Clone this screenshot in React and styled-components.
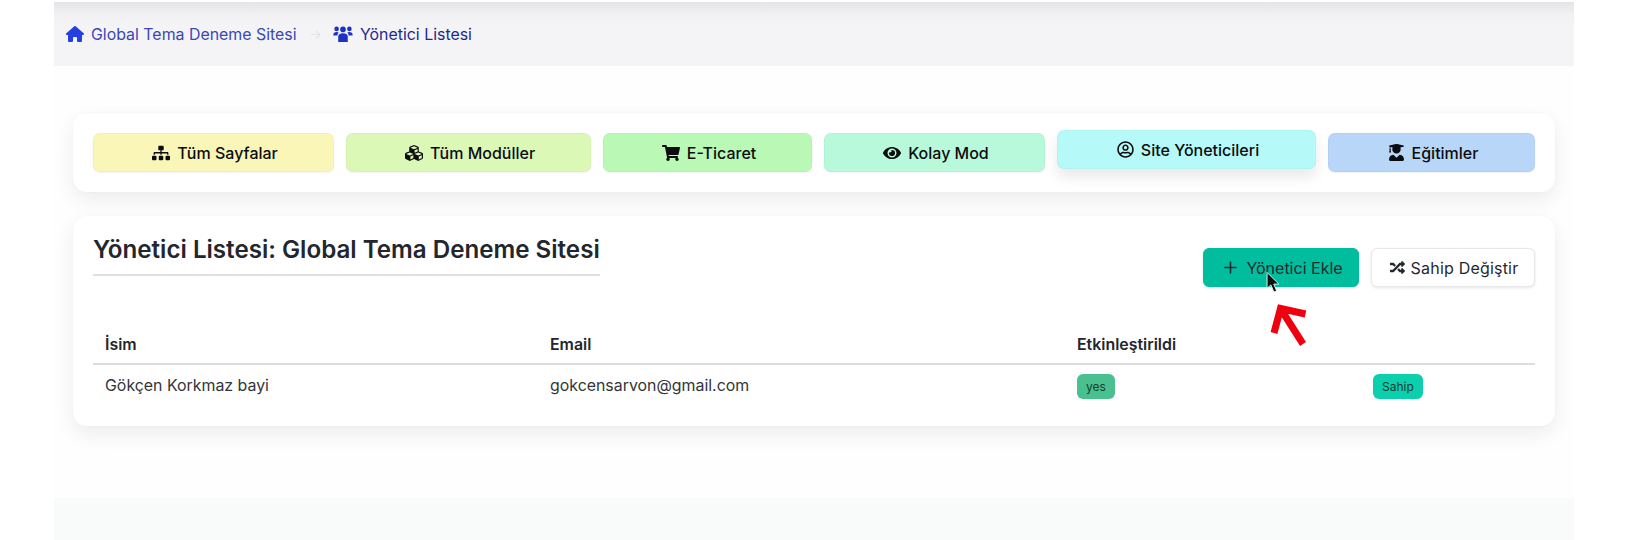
import styled, { createGlobalStyle } from 'styled-components';
import { FaSitemap, FaCubes, FaShoppingCart, FaEye, FaRegUserCircle, FaUserGraduate, FaRandom } from 'react-icons/fa';
import { FaHouse } from 'react-icons/fa6';
import { LuPlus } from 'react-icons/lu';

const GlobalStyle = createGlobalStyle`
    html, body {
        margin: 0;
        padding: 0;
        background: #fff;
        font-family: Inter, "Liberation Sans", sans-serif;
        overflow: hidden;
    }
`;

const Page = styled.div`
    width: 1520px;
    height: 540px;
    margin-left: 54px;
    padding-top: 2px;
    box-sizing: border-box;
    display: flex;
    flex-direction: column;
    background: #fefefe;
`;

// Barra de migas
const Breadcrumb = styled.nav`
    height: 64px;
    flex: none;
    box-sizing: border-box;
    padding: 0 12px;
    display: flex;
    align-items: center;
    font-size: 15.9px;
    background: linear-gradient(#e4e4e7 0, #f1f1f4 12px, #f4f4f7 24px);
`;

const Crumb = styled.span`
    display: inline-flex;
    align-items: center;
    gap: 7px;
    color: ${(p) => (p.$current ? '#1e2a8a' : '#3b47b5')};
    svg {
        color: ${(p) => (p.$current ? '#1d31c4' : '#2540e0')};
    }
`;

const CrumbArrow = styled.span`
    margin: 0 11px 0 13px;
    color: #e2e3e7;
    font-size: 13px;
`;

const Main = styled.main`
    flex: none;
    height: 432px;
    box-sizing: border-box;
    padding: 47px 19px 0;
    display: flex;
    flex-direction: column;
    gap: 24px;
`;

const Card = styled.section`
    position: relative;
    background: #fff;
    border-radius: 14px;
    box-shadow: 0 8px 20px rgba(0, 0, 0, 0.07), 0 0 3px rgba(0, 0, 0, 0.03);
`;

const Toolbar = styled(Card)`
    height: 79px;
    box-sizing: border-box;
    padding: 20px;
    display: grid;
    grid-template-columns: 241px 245px 209px 221px 259px 1fr;
    gap: 12px;
`;

const ToolButton = styled.button`
    height: 39px;
    padding: 0 0 0 3px;
    display: flex;
    align-items: center;
    justify-content: center;
    gap: 7px;
    font: 500 16px Inter, "Liberation Sans", sans-serif;
    color: #0c0c0f;
    background: ${(p) => p.$bg};
    border: 1px solid rgba(0, 0, 0, 0.025);
    border-radius: 7px;
    transform: ${(p) => (p.$active ? 'translateY(-3px)' : 'none')};
    box-shadow: ${(p) => (p.$active ? '0 8px 14px rgba(0, 0, 0, 0.09)' : '0 1px 2px rgba(0, 0, 0, 0.05)')};
`;

const ListCard = styled(Card)`
    height: 210px;
    box-sizing: border-box;
    padding: 20px 20px 0;
`;

const ListHeader = styled.div`
    height: 96px;
    display: flex;
    justify-content: space-between;
    align-items: flex-start;
`;

const Title = styled.h1`
    margin: 0;
    padding-bottom: 11px;
    font-size: 24.15px;
    line-height: 27px;
    font-weight: 600;
    color: #24262e;
    border-bottom: 2px solid #dfe0e2;
`;

const Actions = styled.div`
    margin-top: 12px;
    display: flex;
    gap: 12px;
`;

const ActionButton = styled.button`
    height: 39px;
    display: flex;
    align-items: center;
    justify-content: center;
    gap: 6px;
    width: ${(p) => (p.$primary ? '156px' : '164px')};
    padding: 0 0 0 2px;
    font: 400 16px Inter, "Liberation Sans", sans-serif;
    letter-spacing: ${(p) => (p.$primary ? '0' : '0.2px')};
    color: #26282f;
    background: ${(p) => (p.$primary ? '#00bd9d' : '#fff')};
    border: 1px solid ${(p) => (p.$primary ? '#00bd9d' : '#e8e8ea')};
    border-radius: 6px;
    box-shadow: 0 1px 3px rgba(0, 0, 0, 0.1);
`;

const Table = styled.table`
    width: 100%;
    table-layout: fixed;
    border-collapse: collapse;
    font-size: 15.9px;
    color: #33353b;
`;

const HeadCell = styled.th`
    width: ${(p) => p.$w};
    height: 32px;
    padding: 0 12px 7px;
    box-sizing: border-box;
    text-align: left;
    font-weight: 600;
    color: #24262e;
    border-bottom: 2px solid #dcdddf;
`;

const Cell = styled.td`
    padding: 9px 12px 0;
    vertical-align: top;
    line-height: 24px;
`;

const Badge = styled.span`
    display: inline-block;
    padding: 0 9px;
    height: 25px;
    line-height: 25px;
    font-size: 12px;
    color: #173d33;
    background: ${(p) => p.$bg};
    border-radius: 6px;
`;

const Annotation = styled.svg`
    position: absolute;
    pointer-events: none;
`;

const Footer = styled.footer`
    flex: 1;
    background: #f9fafa;
`;

const UsersIcon = () => (
    <svg width="20" height="16" viewBox="0 0 20 16" fill="currentColor">
        <circle cx="3.6" cy="2.9" r="2.3" />
        <circle cx="10" cy="3.4" r="2.8" />
        <circle cx="16.4" cy="2.9" r="2.3" />
        <path d="M0.3 9.4 C0.3 6.9 1.6 6 3.6 6 C4.5 6 5.2 6.2 5.7 6.6 C4.9 7.3 4.5 8.2 4.4 9.4 Z" />
        <path d="M19.7 9.4 C19.7 6.9 18.4 6 16.4 6 C15.5 6 14.8 6.2 14.3 6.6 C15.1 7.3 15.5 8.2 15.6 9.4 Z" />
        <path d="M5.2 16 V11 C5.2 8.6 6.8 7.3 10 7.3 C13.2 7.3 14.8 8.6 14.8 11 V16 Z" />
    </svg>
);

const tools = [
    { label: 'Tüm Sayfalar', icon: <FaSitemap size={18} />, bg: '#f9f6b8' },
    { label: 'Tüm Modüller', icon: <FaCubes size={18} />, bg: '#dcf8b7' },
    { label: 'E-Ticaret', icon: <FaShoppingCart size={18} />, bg: '#baf9b5' },
    { label: 'Kolay Mod', icon: <FaEye size={18} />, bg: '#b7f9da' },
    { label: 'Site Yöneticileri', icon: <FaRegUserCircle size={17} />, bg: '#b6f9f9', active: true },
    { label: 'Eğitimler', icon: <FaUserGraduate size={17} />, bg: '#b8d6f7' },
];

export default function App() {
    return (
        <Page>
            <GlobalStyle />
            <Breadcrumb>
                <Crumb><FaHouse size={18} /> Global Tema Deneme Sitesi</Crumb>
                <CrumbArrow>→</CrumbArrow>
                <Crumb $current><UsersIcon /> Yönetici Listesi</Crumb>
            </Breadcrumb>

            <Main>
                <Toolbar as="div">
                    {tools.map((t) => (
                        <ToolButton key={t.label} $bg={t.bg} $active={t.active}>
                            {t.icon} {t.label}
                        </ToolButton>
                    ))}
                </Toolbar>

                <ListCard>
                    <ListHeader>
                        <Title>Yönetici Listesi: Global Tema Deneme Sitesi</Title>
                        <Actions>
                            <ActionButton $primary><LuPlus size={19} /> Yönetici Ekle</ActionButton>
                            <ActionButton><FaRandom size={15} /> Sahip Değiştir</ActionButton>
                        </Actions>
                    </ListHeader>

                    <Table>
                        <thead>
                            <tr>
                                <HeadCell $w="445px">İsim</HeadCell>
                                <HeadCell $w="527px">Email</HeadCell>
                                <HeadCell $w="296px">Etkinleştirildi</HeadCell>
                                <HeadCell />
                            </tr>
                        </thead>
                        <tbody>
                            <tr>
                                <Cell>Gökçen Korkmaz bayi</Cell>
                                <Cell>gokcensarvon@gmail.com</Cell>
                                <Cell><Badge $bg="#48c08f">yes</Badge></Cell>
                                <Cell><Badge $bg="#0ccfae">Sahip</Badge></Cell>
                            </tr>
                        </tbody>
                    </Table>

                    {/* Flecha roja y cursor sobre el botón */}
                    <Annotation style={{ left: 1192, top: 85 }} width="50" height="50" viewBox="0 0 50 50">
                        <path d="M38 43 L17 10 M9 32 L15.5 7.5 L40.5 13" fill="none" stroke="#f0000f" strokeWidth="7" />
                    </Annotation>
                    <Annotation style={{ left: 1193, top: 55 }} width="17" height="24" viewBox="0 0 16 22">
                        <path d="M1 1 L1 16 L4.6 12.8 L7.4 19.5 L10 18.4 L7.3 12 L12 12 Z" fill="#111" stroke="#fff" strokeWidth="0.8" />
                    </Annotation>
                </ListCard>
            </Main>

            <Footer />
        </Page>
    );
}
